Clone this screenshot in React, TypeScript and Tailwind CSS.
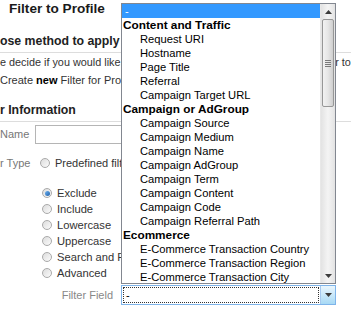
import React from "react";

const groups = [
  {
    label: "Content and Traffic",
    items: ["Request URI", "Hostname", "Page Title", "Referral", "Campaign Target URL"],
  },
  {
    label: "Campaign or AdGroup",
    items: [
      "Campaign Source",
      "Campaign Medium",
      "Campaign Name",
      "Campaign AdGroup",
      "Campaign Term",
      "Campaign Content",
      "Campaign Code",
      "Campaign Referral Path",
    ],
  },
  {
    label: "Ecommerce",
    items: [
      "E-Commerce Transaction Country",
      "E-Commerce Transaction Region",
      "E-Commerce Transaction City",
      "E-Commerce Transaction State",
    ],
  },
];

const filterTypes = ["Exclude", "Include", "Lowercase", "Uppercase", "Search and Replace", "Advanced"];

function Radio({ checked = false }: { checked?: boolean }) {
  return (
    <span className="flex items-center justify-center w-[10px] h-[10px] rounded-full border border-[#a9a9a9] bg-gradient-to-br from-[#dcdcdc] to-[#fbfbfb] shrink-0">
      {checked && <span className="w-[5px] h-[5px] rounded-full bg-gradient-to-br from-[#6db3f2] to-[#1f5fa8]" />}
    </span>
  );
}

function Triangle({ up = false }: { up?: boolean }) {
  return (
    <svg width="7" height="4" viewBox="0 0 7 4">
      <path d={up ? "M0 4 L3.5 0 L7 4 Z" : "M0 0 L3.5 4 L7 0 Z"} fill="#3c3c3c" />
    </svg>
  );
}

function Listbox() {
  return (
    <div className="absolute left-[121px] top-[3px] w-[215px] h-[281px] border border-[#828790] bg-white flex overflow-hidden text-black">
      <div className="flex-1 flex flex-col">
        <div className="h-[14px] leading-[14px] bg-[#3399ff] text-white pl-[3px] text-[11px]">-</div>
        {groups.map((g) => (
          <div key={g.label} className="flex flex-col">
            <div className="h-[14px] leading-[14px] pl-[1px] font-bold text-[11.8px]">{g.label}</div>
            {g.items.map((it) => (
              <div key={it} className="h-[14px] leading-[14px] pl-[18px] text-[11.2px] whitespace-nowrap">
                {it}
              </div>
            ))}
          </div>
        ))}
      </div>
      <div className="w-[15px] flex flex-col bg-gradient-to-r from-[#e3e3e3] via-[#f4f4f4] to-[#e3e3e3] border-l border-[#e8e8e8]">
        <div className="h-[15px] flex items-center justify-center">
          <Triangle up />
        </div>
        <div className="mx-[1px] h-[88px] rounded-[2px] border border-[#979797] bg-gradient-to-r from-[#f2f2f2] via-[#e6e6e6] to-[#cfcfcf] flex flex-col items-center justify-center gap-[1px]">
          <span className="w-[6px] h-[1px] bg-[#7a7a7a]" />
          <span className="w-[6px] h-[1px] bg-[#7a7a7a]" />
          <span className="w-[6px] h-[1px] bg-[#7a7a7a]" />
          <span className="w-[6px] h-[1px] bg-[#7a7a7a]" />
        </div>
        <div className="flex-1" />
        <div className="h-[15px] flex items-center justify-center">
          <Triangle />
        </div>
      </div>
    </div>
  );
}

export default function App() {
  return (
    <div className="relative w-[351px] h-[311px] overflow-hidden bg-white text-[#222] font-['Liberation_Sans',Arial,sans-serif]">
      <div className="flex flex-col">
        <div className="h-[20px] leading-[18px] pl-[9px] text-[13.6px] font-bold text-[#1a1a1a]">Filter to Profile</div>

        <div className="mt-[12px] h-[21px] leading-[18px] border-b border-[#dddddd] text-[12.3px] font-bold whitespace-nowrap">
          ose method to apply filter
        </div>
        <div className="h-[18px] leading-[18px] text-[10.85px] text-[#333] whitespace-nowrap">
          e decide if you would like to create a new one or apply an existing filter to this profile.
        </div>
        <div className="h-[18px] leading-[18px] text-[11px] text-[#333] whitespace-nowrap">
          Create <b className="text-black">new</b> Filter for Profile
        </div>

        <div className="mt-[12px] h-[21px] leading-[18px] border-b border-[#dddddd] text-[12.3px] font-bold whitespace-nowrap">
          r Information
        </div>

        <div className="mt-[3px] flex items-center h-[19px]">
          <span className="w-[29px] text-right text-[11px] text-[#777]">Name</span>
          <span className="ml-[6px] w-[140px] h-[19px] border border-[#b5b5b5] bg-white" />
        </div>

        <div className="mt-[10px] flex items-center h-[18px]">
          <span className="w-[29px] text-right text-[11px] text-[#777] whitespace-nowrap">r Type</span>
          <span className="ml-[11px]">
            <Radio />
          </span>
          <span className="ml-[5px] text-[11px] text-[#333] whitespace-nowrap">Predefined filter</span>
        </div>

        <div className="mt-[13px] flex flex-col pl-[42px]">
          {filterTypes.map((t, i) => (
            <div key={t} className="h-[16px] flex items-center gap-[5px] text-[11.2px] text-[#333] whitespace-nowrap">
              <Radio checked={i === 0} />
              {t}
            </div>
          ))}
        </div>

        <div className="mt-[4px] flex items-center h-[20px]">
          <span className="w-[113px] text-right text-[11px] text-[#888]">Filter Field</span>
          <div className="ml-[8px] w-[215px] h-[20px] border border-[#7eb4ea] bg-white flex">
            <div className="flex-1 m-[1px] border border-dotted border-[#333] flex items-center pl-[2px] text-[11px] text-black">
              -
            </div>
            <div className="w-[15px] border-l border-[#a6c8ee] bg-gradient-to-b from-[#eaf6fd] to-[#a7d9f5] flex items-center justify-center">
              <Triangle />
            </div>
          </div>
        </div>
      </div>

      <Listbox />
    </div>
  );
}
